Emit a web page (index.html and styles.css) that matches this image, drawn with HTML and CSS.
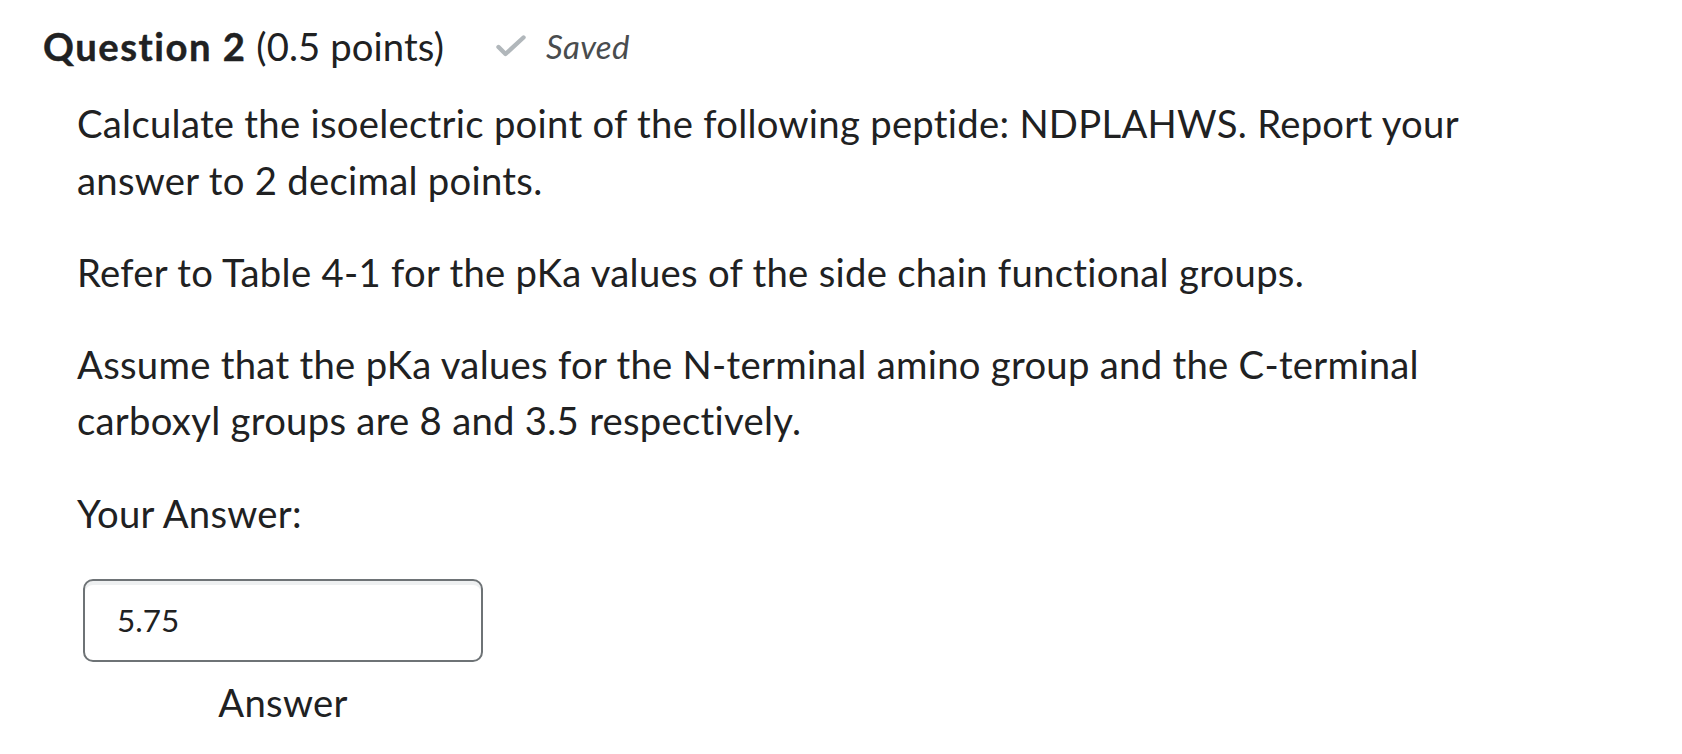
FILE: index.html
```html
<!DOCTYPE html>
<html lang="en">
<head>
<meta charset="utf-8">
<title>Question 2</title>
<link rel="stylesheet" href="styles.css">
</head>
<body>
<div class="question">
  <div class="q-header">
    <h2 class="q-title"><span class="q-num">Question 2</span> (0.5 points)</h2>
    <div class="saved">
      <svg class="check" width="30" height="22" viewBox="0 0 30 22" aria-hidden="true">
        <path d="M2.5 12 L9.5 19 L27.5 2.5" fill="none" stroke="#b1b7bb" stroke-width="4.4" stroke-linecap="round" stroke-linejoin="round"/>
      </svg>
      <span class="saved-text">Saved</span>
    </div>
  </div>
  <div class="q-body">
    <p>Calculate the isoelectric point of the following peptide: NDPLAHWS. Report your answer to 2 decimal points.</p>
    <p>Refer to Table 4-1 for the pKa values of the side chain functional groups.</p>
    <p>Assume that the pKa values for the N-terminal amino group and the C-terminal carboxyl groups are 8 and 3.5 respectively.</p>
    <p class="your-answer">Your Answer:</p>
    <div class="answer-field">
      <input class="answer-input" type="text" value="5.75" aria-label="Answer">
      <span class="answer-label">Answer</span>
    </div>
  </div>
</div>
</body>
</html>
```

FILE: styles.css
```css
html, body {
  margin: 0;
  padding: 0;
  background: #ffffff;
}

body {
  font-family: Lato, "Noto Sans", sans-serif;
  color: #202122;
  font-variant-ligatures: no-common-ligatures;
}

.question {
  padding: 18px 0 0 43px;
}

.q-header {
  display: flex;
  align-items: center;
}

.q-title {
  margin: 0;
  font-size: 38.25px;
  line-height: 56.25px;
  font-weight: 400;
  letter-spacing: 0.1px;
}

.q-num {
  font-weight: 700;
  letter-spacing: 1.5px;
  -webkit-text-stroke: 0.4px #202122;
}

.saved {
  display: flex;
  align-items: center;
  margin-left: 52px;
  margin-bottom: 1px;
}

.check {
  display: block;
}

.saved-text {
  margin-left: 20px;
  font-style: italic;
  font-size: 33px;
  line-height: 40px;
  letter-spacing: 0.3px;
  color: #494c4e;
}

.q-body {
  margin-top: 21px;
  padding-left: 34px;
  max-width: 1450px;
}

.q-body p {
  margin: 0 0 36px;
  font-size: 38.25px;
  line-height: 56.25px;
  letter-spacing: 0.28px;
}

.q-body p.your-answer {
  margin-bottom: 38px;
}

.answer-field {
  display: inline-flex;
  flex-direction: column;
  align-items: center;
  margin-left: 6px;
}

.answer-input {
  box-sizing: border-box;
  width: 400px;
  height: 83px;
  margin: 0;
  padding: 0 32px;
  border: 2px solid #6e7376;
  border-radius: 10px;
  box-shadow: inset 0 4px 0 #eef0f1;
  font-family: Lato, "Noto Sans", sans-serif;
  font-size: 31.5px;
  color: #202122;
  background: #ffffff;
  outline: none;
}

.answer-label {
  margin-top: 12px;
  font-size: 38.25px;
  line-height: 56.25px;
  letter-spacing: 0.28px;
}
```
